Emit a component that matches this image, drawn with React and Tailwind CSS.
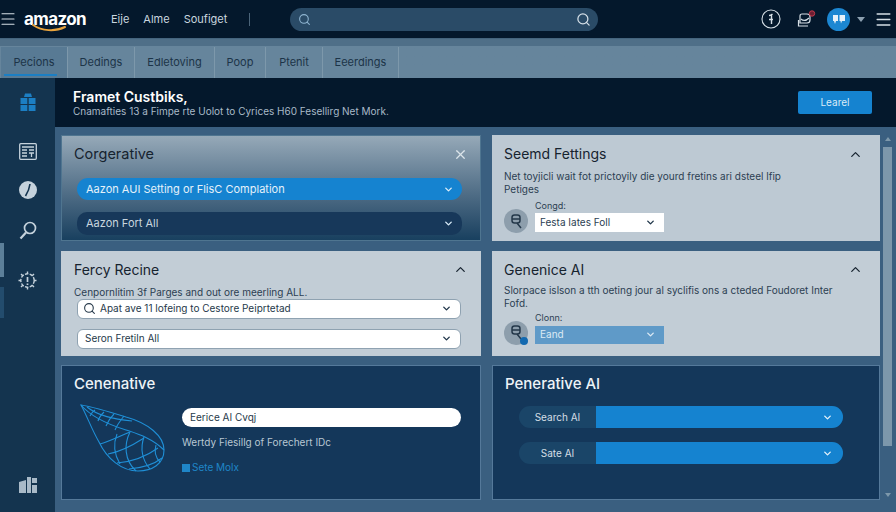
import { Search, ChevronDown, ChevronUp, X, Menu } from 'lucide-react';

const tabs = [
  ['Pecions', 'w-[67px]'],
  ['Dedings', 'w-[67px]'],
  ['Edletoving', 'w-[80px]'],
  ['Poop', 'w-[51px]'],
  ['Ptenit', 'w-[57px]'],
  ['Eeerdings', 'w-[76px]'],
];

function Globe() {
  return (
    <svg width="86" height="68" viewBox="0 0 86 68" fill="none" stroke="#1f8fd6" strokeWidth="1.1">
      <path d="M1 1C14 3 30 8 46 13C68 19 84 32 84 46C84 60 72 67 58 67C42 67 27 55 19 38C12 26 7 12 1 1Z" />
      <path d="M1 1C12 14 30 21 46 26C58 30 72 34 84 46" />
      <path d="M7 3C18 12 34 15 52 17M15 6C12 8 11 10 10 12M24 8C21 11 19 13 18 17M34 10C30 14 28 17 26 22M44 12C40 17 37 21 35 26" />
      <path d="M20 40C28 38 38 33 50 28M28 50C40 48 50 43 64 34M37 59C50 58 64 54 78 44M49 65C60 64 72 62 82 54" />
      <path d="M50 28C44 40 44 56 56 67M64 33C60 44 62 56 70 65M76 41C74 48 76 54 80 58M37 30C33 40 34 50 40 60" />
    </svg>
  );
}

function AvatarBadge({ dot }) {
  return (
    <div className="relative -mb-[1px] flex h-[24px] w-[24px] shrink-0 items-center justify-center rounded-full bg-[#8d9eac]">
      <svg width="13" height="15" viewBox="0 0 13 15" fill="none" stroke="#24384a" strokeWidth="1.5">
        <rect x="2" y="1" width="8" height="8" rx="2.5" />
        <path d="M2 5H10M7 9L11 14" />
      </svg>
      {dot && <span className="absolute bottom-0 right-0 h-2 w-2 rounded-full bg-[#1269b0]" />}
    </div>
  );
}

function Select({ children, className, icon, chevron = 'text-[#1f3549]' }) {
  return (
    <div className={`flex items-center justify-between ${className}`}>
      <span className="flex items-center gap-1">
        {icon}
        {children}
      </span>
      <ChevronDown size={11} strokeWidth={3} className={chevron} />
    </div>
  );
}

export default function App() {
  return (
    <div className="flex h-[512px] w-[896px] flex-col overflow-hidden bg-[#3a5f80] font-['Inter',sans-serif] text-[#16232f]">
      <header className="flex h-[38px] shrink-0 items-center bg-[#04182c] text-[#c9d6df]">
        <Menu size={18} strokeWidth={1.5} className="ml-[-1px] text-[#d5dee5]" />
        <div className="relative ml-[7px] w-[62px]">
          <span className="block text-[17px] font-bold leading-[18px] tracking-[-0.6px] text-white">amazon</span>
          <svg className="absolute left-[8px] top-[14px]" width="36" height="9" viewBox="0 0 36 9" fill="none">
            <path d="M1 1C10 7 23 8 33 3" stroke="#e8a33d" strokeWidth="2" strokeLinecap="round" />
          </svg>
        </div>
        <nav className="ml-[25px] flex items-center gap-[14px] text-[11px]">
          <span>Eije</span>
          <span>Alme</span>
          <span>Soufiget</span>
        </nav>
        <div className="ml-[22px] h-[13px] w-px bg-[#4b6479]" />
        <div className="ml-[40px] flex h-[23px] w-[308px] items-center justify-between rounded-full bg-[#2a4b67] pl-[8px] pr-[7px]">
          <Search size={13} className="text-[#8eb4d0]" />
          <Search size={15} className="text-[#d6e0e8]" />
        </div>
        <div className="ml-auto flex items-center">
          <svg width="20" height="20" viewBox="0 0 20 20" fill="none" stroke="#d5dee5" strokeWidth="1.1">
            <circle cx="10" cy="10" r="9" />
            <path d="M8 6.5C9.5 6.5 10.5 6 11.5 5M10.5 5V15M8 10.5H12" strokeWidth="1.4" />
          </svg>
          <svg className="ml-[16px]" width="19" height="19" viewBox="0 0 19 19" fill="none">
            <path d="M3 6C3 4.5 4 4 5 4H10C12 4 13 5 13 7V10C13 12 12 13 10 13H3V6ZM1.5 10V16H11" stroke="#d5dee5" strokeWidth="1.2" />
            <path d="M4 9C6 11 9 11 12 8" stroke="#d5dee5" strokeWidth="1.1" />
            <circle cx="15" cy="3.5" r="2.7" fill="#6b1f33" stroke="#c23a4b" />
          </svg>
          <div className="ml-[11px] flex h-[23px] w-[23px] items-center justify-center rounded-full bg-[#1c87d2]">
            <svg width="12" height="10" viewBox="0 0 12 10" fill="#e6f2fa">
              <path d="M0 1H5V7L3 7L2 10L1 7H0ZM6.5 1H12V7H9L8 9.5L7.5 7H6.5Z" />
            </svg>
          </div>
          <span className="ml-[7px] h-0 w-0 border-x-[4px] border-t-[5px] border-x-transparent border-t-[#8ca0b0]" />
          <Menu size={19} strokeWidth={1.75} className="ml-[9px] mr-[3px] text-[#d5dee5]" />
        </div>
      </header>

      <div className="flex h-[40px] shrink-0 items-end border-t border-[#44647e] bg-gradient-to-b from-[#4f6f88] from-[18%] to-[#66859c] to-[18%] pl-[1px]">
        {tabs.map(([label, width], i) => (
          <div
            key={label}
            className={`relative flex h-[31px] items-center justify-center border-r border-[#7d98ab] text-[11px] text-[#1c3448] ${width} ${i === 0 ? 'bg-[#587a94]' : 'bg-[#66859c]'}`}
          >
            {label}
            {i === 0 && <span className="absolute bottom-[2px] left-[3px] right-[10px] h-[2px] bg-[#1c7fc4]" />}
          </div>
        ))}
      </div>

      <div className="flex min-h-0 flex-1">
        <aside className="relative flex w-[55px] shrink-0 flex-col items-center bg-[#14344f] pb-[19px] pt-[15px] text-[#c5d2dc]">
          <svg width="18" height="19" viewBox="0 0 18 19" fill="#1c7fc4">
            <path d="M6 0.5H12L13 4H5Z" />
            <path d="M1.5 5H8.3V11H1.5ZM9.7 5H16.5V11H9.7ZM1.5 12H8.3V18H1.5ZM9.7 12H16.5V18H9.7Z" />
          </svg>
          <svg className="mt-[31px]" width="18" height="17" viewBox="0 0 18 17" fill="none" stroke="#c5d2dc" strokeWidth="1.3">
            <rect x="0.7" y="0.7" width="16.6" height="15.6" rx="1" />
            <path d="M3 4H15M3 7H8M3 10H8M3 13H8M10 7H15M10 10H15M12.5 10V14" />
          </svg>
          <svg className="mt-[21px]" width="18" height="18" viewBox="0 0 18 18">
            <circle cx="9" cy="9" r="9" fill="#c5d2dc" />
            <path d="M11 3C10.5 7 9 11 6.5 15" stroke="#14344f" strokeWidth="1.6" fill="none" />
          </svg>
          <svg className="mt-[22px]" width="18" height="19" viewBox="0 0 18 19" fill="none" stroke="#c5d2dc" strokeWidth="1.7">
            <circle cx="11" cy="7" r="5.5" />
            <path d="M7 11.5L1.5 17.5" strokeWidth="2.2" />
          </svg>
          <svg className="mt-[31px]" width="19" height="19" viewBox="0 0 19 19" fill="none" stroke="#c5d2dc" strokeWidth="1.4">
            <circle cx="9.5" cy="9.5" r="6.7" strokeDasharray="3.4 1.4" />
            <path d="M9.5 0.5V3M9.5 16V18.5M0.5 9.5H3M16 9.5H18.5M3 3L4.8 4.8M14.2 14.2L16 16M16 3L14.2 4.8M4.8 14.2L3 16" />
            <path d="M9.5 6V11M9.5 12.5V14" strokeWidth="1.7" />
          </svg>
          <svg className="mt-auto" width="18" height="16" viewBox="0 0 18 16" fill="#a9bac8">
            <path d="M0 5L7 3V16H0ZM8 0H12V16H8ZM13 1H18V6H13ZM13 8H18V16H13Z" />
          </svg>
          <span className="absolute left-0 top-[165px] h-[34px] w-[4px] bg-[#5c7f99]" />
          <span className="absolute left-0 top-[209px] h-[31px] w-[4px] bg-[#234c6d]" />
        </aside>

        <main className="flex min-w-0 flex-1 flex-col">
          <section className="flex h-[49px] shrink-0 items-center justify-between bg-[#04182c] pl-[18px] pr-[24px]">
            <div>
              <h1 className="text-[14px] font-semibold leading-[17px] text-white">Framet Custbiks,</h1>
              <p className="text-[10px] leading-[12px] text-[#a9bac8]">Cnamafties 13 a Fimpe rte Uolot to Cyrices H60 Fesellirg Net Mork.</p>
            </div>
            <button className="flex h-[23px] w-[74px] items-center justify-center rounded-[2px] bg-[#1583d0] text-[10px] text-[#d9ecf8]">Learel</button>
          </section>

          <div className="flex min-h-0 flex-1 pl-[6px] pt-[8px]">
            <div className="grid h-[365px] w-[819px] shrink-0 grid-cols-[420px_388px] grid-rows-[106px_105px_135px] gap-x-[11px] gap-y-[9.5px]">
              <section className="border border-[#4f7590] bg-gradient-to-b from-[#96a9b8] to-[#18405f] px-[12px] pt-[8px]">
                <div className="flex items-center justify-between">
                  <h2 className="text-[14.5px] leading-[20px]">Corgerative</h2>
                  <X size={15} className="text-[#dbe4ea]" />
                </div>
                <Select className="ml-[3px] mr-[6px] mt-[14px] h-[22px] rounded-full bg-[#1583d0] pl-[9px] pr-[8px] text-[11px] text-[#e4f1fa]" chevron="text-[#d9ecf8]">Aazon AUI Setting or FlisC Complation</Select>
                <Select className="ml-[3px] mr-[6px] mt-[12px] h-[23px] rounded-[10px] bg-[#17385a] pl-[9px] pr-[8px] text-[11px] text-[#c9d6df]" chevron="text-[#d9ecf8]">Aazon Fort All</Select>
              </section>

              <section className="bg-[#bdc9d3] px-[12px] pt-[9px]">
                <div className="flex items-center justify-between">
                  <h2 className="text-[14px] leading-[20px]">Seemd Fettings</h2>
                  <ChevronUp size={15} className="mr-[5px]" />
                </div>
                <p className="mt-[6px] text-[10px] leading-[13px] text-[#2c4052]">Net toyjicli wait fot prictoyily die yourd fretins ari dsteel lfip<br />Petiges</p>
                <div className="mt-[4px] flex items-end gap-[7px]">
                  <AvatarBadge />
                  <div>
                    <div className="mb-[1px] text-[9px] leading-[12px] text-[#2c4052]">Congd:</div>
                    <Select className="h-[19px] w-[129px] bg-white pl-[5px] pr-[8px] text-[10px] text-[#2c4052]">Festa Iates Foll</Select>
                  </div>
                </div>
              </section>

              <section className="bg-[#c2cdd6] px-[13px] pt-[9px]">
                <div className="flex items-center justify-between">
                  <h2 className="text-[14px] leading-[20px]">Fercy Recine</h2>
                  <ChevronUp size={15} />
                </div>
                <p className="mt-[6px] text-[10px] leading-[13px] text-[#2c4052]">Cenpornlitim 3f Parges and out ore meerling ALL.</p>
                <Select
                  className="ml-[3px] mr-[7px] h-[20px] rounded-[6px] border border-[#8fa2b1] bg-white pl-[5px] pr-[8px] text-[10px] text-[#26394a]"
                  icon={<Search size={13} className="text-[#26394a]" />}
                >
                  Apat ave 11 lofeing to Cestore Peiprtetad
                </Select>
                <Select className="ml-[3px] mr-[7px] mt-[10px] h-[20px] rounded-[6px] border border-[#8fa2b1] bg-white pl-[7px] pr-[8px] text-[10px] text-[#26394a]">Seron Fretiln All</Select>
              </section>

              <section className="bg-[#c2cdd6] px-[12px] pt-[9px]">
                <div className="flex items-center justify-between">
                  <h2 className="text-[14px] leading-[20px]">Genenice AI</h2>
                  <ChevronUp size={15} className="mr-[5px]" />
                </div>
                <p className="mt-[4px] text-[10px] leading-[13px] text-[#2c4052]">Slorpace islson a tth oeting jour al syclifis ons a cteded Foudoret Inter<br />Fofd.</p>
                <div className="mt-[2px] flex items-end gap-[7px]">
                  <AvatarBadge dot />
                  <div>
                    <div className="mb-[2px] text-[9px] leading-[12px] text-[#2c4052]">Clonn:</div>
                    <Select className="h-[18px] w-[129px] bg-[#5f9ac8] pl-[5px] pr-[8px] text-[10px] text-[#dceaf4]" chevron="text-[#dceaf4]">Eand</Select>
                  </div>
                </div>
              </section>

              <section className="border border-[#55799a] bg-[#14375a] px-[12px] pt-[8px]">
                <h2 className="text-[15px] font-medium leading-[20px] text-[#eef3f7]">Cenenative</h2>
                <div className="mt-[10px] flex">
                  <div className="ml-[6px] shrink-0">
                    <Globe />
                  </div>
                  <div className="ml-[16px] flex-1 pr-[7px] pt-[4px]">
                    <div className="flex h-[19px] items-center rounded-full bg-white pl-[8px] text-[10px] text-[#26394a]">Eerice AI Cvqj</div>
                    <p className="mt-[9px] text-[10px] leading-[13px] text-[#b8c7d3]">Wertdy Fiesillg of Forechert IDc</p>
                    <div className="mt-[12px] flex items-center gap-[2px] text-[10px] leading-[13px] text-[#1f86c8]">
                      <span className="h-2 w-2 bg-[#1f86c8]" />
                      Sete Molx
                    </div>
                  </div>
                </div>
              </section>

              <section className="border border-[#55799a] bg-[#14375a] px-[12px] pt-[8px]">
                <h2 className="text-[15px] font-medium leading-[20px] text-[#eef3f7]">Penerative AI</h2>
                <div className="ml-[14px] mr-[24px] mt-[12px] flex flex-col gap-[14px]">
                  {['Search AI', 'Sate AI'].map((label) => (
                    <div key={label} className="flex h-[22px] overflow-hidden rounded-full bg-[#1a4568]">
                      <span className="flex w-[77px] shrink-0 items-center justify-center text-[10px] text-[#d5dee5]">{label}</span>
                      <div className="flex flex-1 items-center justify-end bg-[#1583d0] pr-[10px]">
                        <ChevronDown size={11} strokeWidth={3} className="text-[#e4f1fa]" />
                      </div>
                    </div>
                  ))}
                </div>
              </section>
            </div>

            <div className="ml-[3px] flex w-[9px] shrink-0 flex-col items-center pt-[2px] text-[#7d98ab]">
              <span className="h-0 w-0 border-x-[3px] border-b-[4px] border-x-transparent border-b-[#7d98ab]" />
              <span className="mt-[6px] h-[299px] w-full bg-[#7c97ab]" />
              <span className="mt-[47px] h-0 w-0 border-x-[3px] border-t-[4px] border-x-transparent border-t-[#7d98ab]" />
            </div>
          </div>
        </main>
      </div>
    </div>
  );
}
